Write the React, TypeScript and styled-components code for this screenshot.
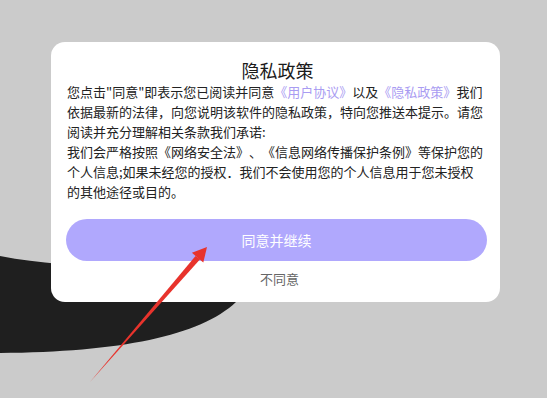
import React from "react";
import styled, { createGlobalStyle } from "styled-components";

const Global = createGlobalStyle`
  html, body { margin: 0; padding: 0; }
  body {
    width: 547px; height: 398px; overflow: hidden;
    background: #cbcbcb;
    font-family: "Noto Sans CJK SC", "Noto Sans", sans-serif;
  }
`;

const Screen = styled.div`
  position: relative;
  width: 547px;
  height: 398px;
  background: #cbcbcb;
  padding: 42px 0 0 51px;
  box-sizing: border-box;
  overflow: hidden;
`;

const Backdrop = styled.svg`
  position: absolute;
  left: 0;
  top: 0;
  width: 547px;
  height: 398px;
  pointer-events: none;
`;

const Overlay = styled.svg`
  position: absolute;
  left: 0;
  top: 0;
  width: 547px;
  height: 398px;
  pointer-events: none;
  z-index: 2;
`;

const Card = styled.div`
  position: relative;
  z-index: 1;
  width: 449px;
  height: 260px;
  box-sizing: border-box;
  background: #ffffff;
  border-radius: 14px;
  padding: 16px 13px 12px 15px;
  display: flex;
  flex-direction: column;
`;

const Title = styled.h1`
  margin: 0;
  font-size: 18px;
  line-height: 24px;
  font-weight: 400;
  color: #1a1a1a;
  text-align: center;
  padding-left: 2px;
`;

const Body = styled.p`
  margin: 0 0 0 1px;
  width: 418px;
  font-size: 13px;
  line-height: 20px;
  color: #222222;
  white-space: nowrap;
  text-spacing-trim: space-all;
`;

const Link = styled.span`
  color: #a99cf2;
`;

const Primary = styled.button`
  margin-top: 17px;
  width: 421px;
  height: 42px;
  border: none;
  border-radius: 21px;
  background: #b0a8fd;
  color: #ffffff;
  font-family: inherit;
  font-size: 14px;
  padding: 0;
`;

const Secondary = styled.button`
  margin-top: 8px;
  align-self: center;
  border: none;
  background: transparent;
  color: #666666;
  font-family: inherit;
  font-size: 13px;
  line-height: 20px;
  padding: 0;
  margin-left: 6px;
`;

export default function App() {
  return (
    <>
      <Global />
      <Screen>
        <Backdrop viewBox="0 0 547 398">
          <path
            d="M0,256 C20,260 40,262 60,264 L240,288 L236,302 C200,336 120,352 0,353 Z"
            fill="#1f1f1f"
          />
        </Backdrop>
        <Card>
          <Title>隐私政策</Title>
          <Body>
            您点击"同意"即表示您已阅读并同意<Link>《用户协议》</Link>以及<Link>《隐私政策》</Link>我们
            <br />
            依据最新的法律，向您说明该软件的隐私政策，特向您推送本提示。请您
            <br />
            阅读并充分理解相关条款我们承诺:
            <br />
            我们会严格按照《网络安全法》、《信息网络传播保护条例》等保护您的
            <br />
            个人信息;如果未经您的授权．我们不会使用您的个人信息用于您未授权
            <br />
            的其他途径或目的。
          </Body>
          <Primary>同意并继续</Primary>
          <Secondary>不同意</Secondary>
        </Card>
        <Overlay viewBox="0 0 547 398">
          <polygon points="90,382 200.1,259.3 195.5,255.9" fill="#e8332c" />
          <polygon points="207,247 203.3,262.6 191.9,252.8" fill="#e8332c" />
        </Overlay>
      </Screen>
    </>
  );
}
